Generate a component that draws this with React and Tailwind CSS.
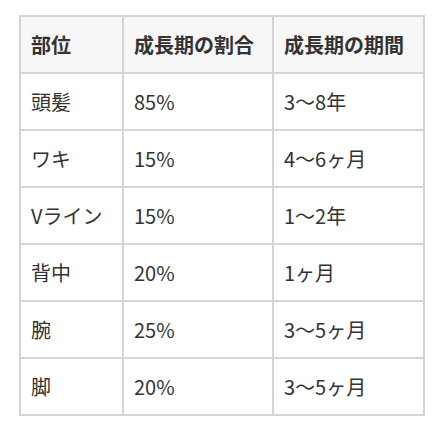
const rows = [
  ["頭髪", "85%", "3〜8年"],
  ["ワキ", "15%", "4〜6ヶ月"],
  ["Vライン", "15%", "1〜2年"],
  ["背中", "20%", "1ヶ月"],
  ["腕", "25%", "3〜5ヶ月"],
  ["脚", "20%", "3〜5ヶ月"],
];

export default function App() {
  return (
    <div className="w-[437px] h-[437px] bg-white pt-[15px] pl-[19px] font-['Noto_Sans_CJK_JP','Noto_Sans',sans-serif] text-[#333]">
      <table className="border-collapse table-fixed w-[404px] text-[20px]">
        <colgroup>
          <col className="w-[103px]" />
          <col className="w-[150px]" />
          <col className="w-[151px]" />
        </colgroup>
        <thead>
          <tr className="bg-[#f7f7f7] h-[57px]">
            <th className="border-2 border-[#d4d4d4] text-left font-bold px-[10px]">部位</th>
            <th className="border-2 border-[#d4d4d4] text-left font-bold px-[10px]">成長期の割合</th>
            <th className="border-2 border-[#d4d4d4] text-left font-bold px-[10px]">成長期の期間</th>
          </tr>
        </thead>
        <tbody>
          {rows.map((r) => (
            <tr key={r[0]} className="h-[57px]">
              {r.map((c, i) => (
                <td key={i} className="border-2 border-[#d4d4d4] px-[10px]">
                  {c}
                </td>
              ))}
            </tr>
          ))}
        </tbody>
      </table>
    </div>
  );
}
